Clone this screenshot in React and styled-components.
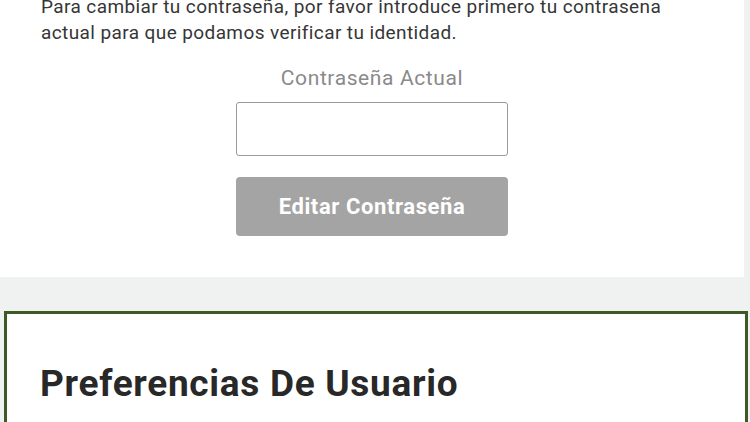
import React from "react";
import styled, { createGlobalStyle } from "styled-components";

const GlobalStyle = createGlobalStyle`
  html, body {
    margin: 0;
    padding: 0;
    background: #f0f1f1;
    font-family: Roboto, "Liberation Sans", sans-serif;
    overflow: hidden;
  }
`;

const Page = styled.div`
  display: flex;
  flex-direction: column;
  gap: 34px;
  width: 750px;
`;

const Card = styled.section`
  width: 744px;
  box-sizing: border-box;
  background: #fff;
  padding: 0 41px 41px;
`;

const Intro = styled.p`
  margin: -6px 0 0;
  font-size: 19px;
  line-height: 26px;
  letter-spacing: 0.4px;
  color: #363636;
  white-space: nowrap;
`;

const Form = styled.div`
  display: flex;
  flex-direction: column;
  align-items: center;
  margin-top: 20px;
`;

const Label = styled.label`
  font-size: 21px;
  line-height: 24px;
  letter-spacing: 0.6px;
  color: #8a8a8a;
`;

const Input = styled.input`
  box-sizing: border-box;
  width: 272px;
  height: 54px;
  margin-top: 12px;
  border: 1px solid #9a9a9a;
  border-radius: 3px;
  background: #fff;
`;

const Button = styled.button`
  box-sizing: border-box;
  width: 272px;
  height: 59px;
  margin-top: 21px;
  border: none;
  border-radius: 4px;
  background: #a4a4a4;
  color: #fff;
  font-family: Roboto, "Liberation Sans", sans-serif;
  font-weight: 700;
  font-size: 22px;
  letter-spacing: 0.6px;
`;

const Preferences = styled.section`
  margin: 0 2px 0 4px;
  height: 140px;
  box-sizing: border-box;
  background: #fff;
  border: 3px solid #3c5a26;
  padding: 48px 33px 0;
`;

const Heading = styled.h2`
  margin: 0;
  font-size: 37px;
  line-height: 44px;
  font-weight: 700;
  color: #282828;
  letter-spacing: 0.7px;
`;

export default function App() {
  return (
    <>
      <GlobalStyle />
      <Page>
        <Card>
          <Intro>
            Para cambiar tu contraseña, por favor introduce primero tu contrasena
            <br />
            actual para que podamos verificar tu identidad.
          </Intro>
          <Form>
            <Label htmlFor="current">Contraseña Actual</Label>
            <Input id="current" type="password" />
            <Button type="button">Editar Contraseña</Button>
          </Form>
        </Card>
        <Preferences>
          <Heading>Preferencias De Usuario</Heading>
        </Preferences>
      </Page>
    </>
  );
}
